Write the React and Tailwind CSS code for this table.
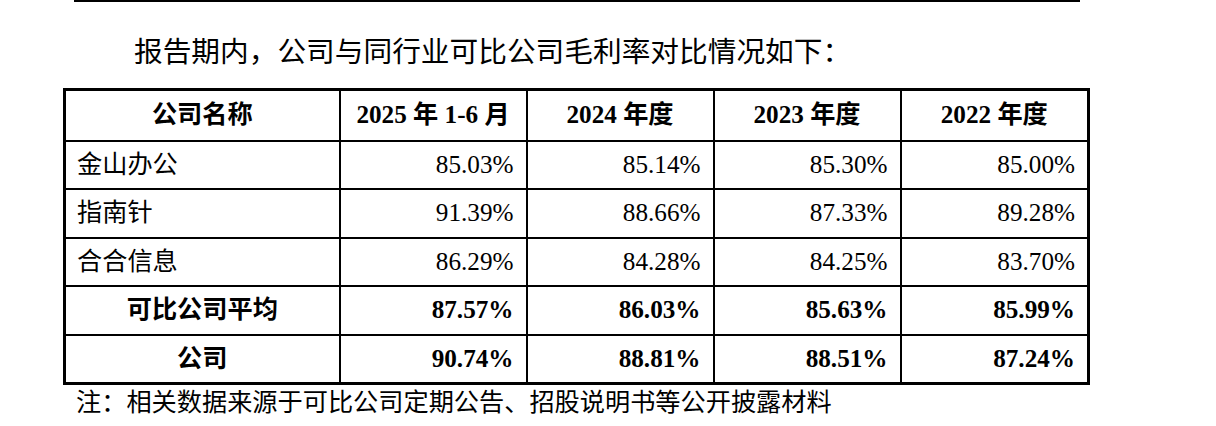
import React from 'react';

const rows = [
    { name: '金山办公', values: ['85.03%', '85.14%', '85.30%', '85.00%'] },
    { name: '指南针', values: ['91.39%', '88.66%', '87.33%', '89.28%'] },
    { name: '合合信息', values: ['86.29%', '84.28%', '84.25%', '83.70%'] },
    { name: '可比公司平均', values: ['87.57%', '86.03%', '85.63%', '85.99%'], bold: true },
    { name: '公司', values: ['90.74%', '88.81%', '88.51%', '87.24%'], bold: true },
];

const headers = ['2025 年 1-6 月', '2024 年度', '2023 年度', '2022 年度'];

const font = "font-['Liberation_Serif','Noto_Sans_CJK_SC',serif]";

const App = () => {
    return (
        <div className={`w-[1216px] h-[426px] bg-white overflow-hidden text-black ${font}`}>
            {/* page rule */}
            <div className="ml-[74px] w-[1006px] h-[2px] bg-black"></div>

            <p className="mt-[34px] ml-[134px] text-[28.7px] leading-[33px] whitespace-nowrap">
                报告期内，公司与同行业可比公司毛利率对比情况如下：
            </p>

            <table className="ml-[63px] mt-[19px] w-[1024px] table-fixed border-collapse border-[3px] border-black text-[25.2px] leading-[28px]">
                <colgroup>
                    <col className="w-[275px]" />
                    <col className="w-[187px]" />
                    <col className="w-[187px]" />
                    <col className="w-[187px]" />
                    <col className="w-[188px]" />
                </colgroup>
                <thead>
                    <tr className="h-[51px]">
                        <th className="border-2 border-black font-bold text-center">公司名称</th>
                        {headers.map((h) => (
                            <th key={h} className="border-2 border-black font-bold text-center">{h}</th>
                        ))}
                    </tr>
                </thead>
                <tbody>
                    {rows.map((row) => (
                        <tr key={row.name} className="h-[48.5px]">
                            <td className={`border-2 border-black px-[11px] ${row.bold ? 'font-bold text-center' : 'text-left'}`}>
                                {row.name}
                            </td>
                            {row.values.map((v, i) => (
                                <td key={i} className={`border-2 border-black pl-[11px] pr-[12px] text-right ${row.bold ? 'font-bold' : ''}`}>
                                    {v}
                                </td>
                            ))}
                        </tr>
                    ))}
                </tbody>
            </table>

            <p className="mt-[3px] ml-[76px] text-[25.2px] leading-[29px] whitespace-nowrap">
                注：相关数据来源于可比公司定期公告、招股说明书等公开披露材料
            </p>
        </div>
    );
};

export default App;
